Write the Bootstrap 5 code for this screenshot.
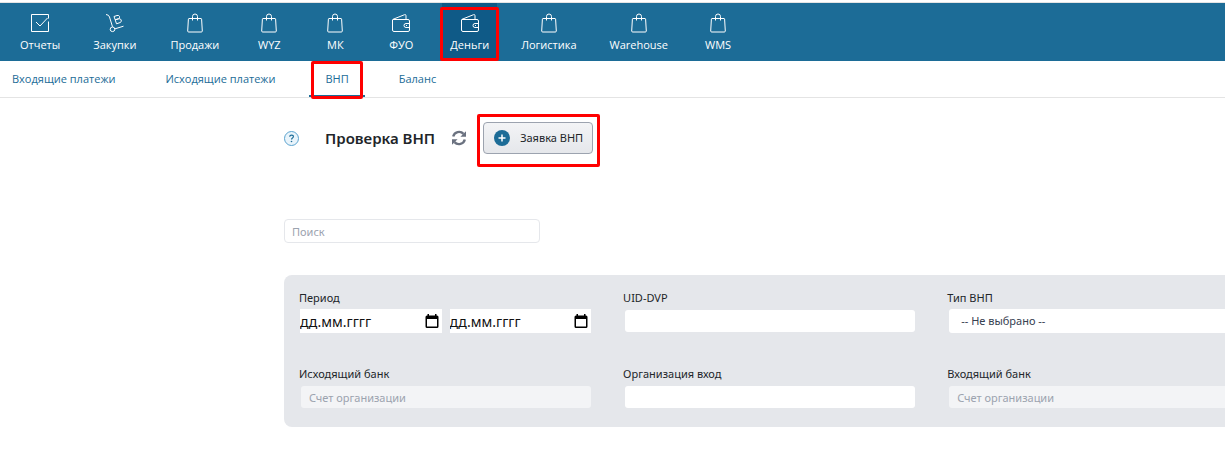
<!DOCTYPE html>
<html lang="ru">
<head>
<meta charset="utf-8">
<meta name="viewport" content="width=device-width, initial-scale=1">
<title>Проверка ВНП</title>
<link href="https://cdn.jsdelivr.net/npm/bootstrap@5.3.0/dist/css/bootstrap.min.css" rel="stylesheet">
<style>
  body { font-family: "Noto Sans", "Open Sans", sans-serif; font-size: 11px; line-height: 20px; color: #212529; }
  a { text-decoration: none; }
  .topbar { background: #1c6c97; border-top: 1px solid #e4e4e4; margin-top: 2px; padding: 0 12px; gap: 16px; font-family: "Open Sans", sans-serif; }
  .topbar a { min-width: 50px; height: 58px; padding: 10px 8px 0; color: #fff; }
  .topbar a.roomy { padding-left: 9px; padding-right: 9px; }
  .topbar a.active { background: #0f5a87; }
  .topbar svg { width: 20px; height: 20px; margin-bottom: 2px; fill: none; stroke: #fff; stroke-width: 1; }
  .subbar { height: 37px; padding: 0 12px; gap: 50px; border-bottom: 1px solid #e4e4e4; font-family: "Open Sans", sans-serif; }
  .subbar a { color: #1c6c97; }
  .subbar a.active::before { content: ""; position: absolute; left: -16px; right: -16px; bottom: 0; height: 2px; background: #1c6c97; }
  .marked::after { content: ""; position: absolute; border: 3px solid #f00; border-radius: 2px; pointer-events: none; }
  .topbar .marked::after { inset: 4px -2px 0; z-index: 1; }
  .subbar .marked::after { inset: 0 -14px -2px; }
  .create-wrap.marked::after { inset: -8px -7px -13px -6px; }
  .workspace { margin-left: 284px; padding-top: 24px; }
  h1 { font-size: 15px; line-height: 24px; font-weight: 600; margin: 0 16px 0 26px; }
  .plain { border: 0; background: none; padding: 0; display: flex; }
  .create { height: 32px; padding: 0 9px 0 10px; gap: 10px; border: 1px solid #9ca3af; border-radius: 4px; background: linear-gradient(#f3f4f6, #e5e7eb); color: #212529; }
  .search { width: 256px; height: 24px; margin-top: 65px; padding: 0 7px; border: 1px solid #e5e7eb; border-radius: 4px; }
  ::placeholder { color: #9ca3af; opacity: 1; }
  .filters { display: grid; grid-template-columns: minmax(0, 35fr) minmax(0, 35fr) minmax(0, 30fr); row-gap: 30px; margin-top: 32px; padding: 13px 0 17px 15px; background: #e5e7eb; border-radius: 8px 0 0 8px; }
  .filters label { display: block; }
  .slot { height: 26px; margin-right: 32px; gap: 8px; }
  .slot > input, .slot > select { flex: 1; min-width: 0; height: 22px; margin: 0 0 0 2px; padding: 0 8px; border: 0; border-radius: 3px; background: #fff; color: #374151; }
  .slot > select { height: 24px; padding: 0 12px; appearance: none; }
  .slot > input:disabled { background: #f3f4f6; }
  .slot.to-edge { margin-right: 0; }
  .to-edge > input, .to-edge > select { border-radius: 3px 0 0 3px; }
  .datebox { flex: 1; min-width: 0; height: 24px; background: #fff; padding-right: 3px; }
  .datebox input { flex: 1; min-width: 0; border: 0; padding: 0; background: none; font-size: 14px; height: 24px; }
  .datebox ::placeholder { color: #111; }
  .slot.period { margin-left: 1px; }
</style>
</head>
<body>
<svg class="d-none">
  <symbol id="bag" viewBox="0 0 20 20"><path d="M4 5.500h12q.5 0 .6.600l.7 11.900q0 1-1 1H3.700q-1 0-1-1L3.400 6.100q.1-.6.6-.6zM7.500 7.500V3.500q0-2.500 2.500-2.500t2.500 2.500v4"/></symbol>
  <symbol id="wallet" viewBox="0 0 20 20"><path d="M2 6.500h15q1.500 0 1.500 1.500v9q0 1.500-1.500 1.500H3Q1.500 18.500 1.500 17V7q0-.5.5-.7L13.500 1.700q1.500-.5 1.500 1v3.800M18.500 10.500h-3.500a2 2 0 0 0 0 4h3.500M15 12.500h1"/></symbol>
  <symbol id="calendar" viewBox="0 0 14 15"><path fill="#000" fill-rule="evenodd" d="M2.500 0h1.500v1.500h6V0h1.500v1.500H12q1.500 0 1.500 1.500v9.500q0 1.500-1.500 1.500H2Q.5 14 .5 12.500V3Q.5 1.500 2 1.500h.5zM2 5v7.500h10V5z"/></symbol>
</svg>
<nav class="topbar d-flex">
  <a href="#" class="d-flex flex-column align-items-center"><svg viewBox="0 0 20 20"><path d="M18.500 8.500v10h-17v-17h17v4M6 9l4 4 7.500-8"/></svg>Отчеты</a>
  <a href="#" class="roomy d-flex flex-column align-items-center"><svg viewBox="0 0 20 20"><path d="M1 1.500q3 .3 3.500 2.500l3 9.800M10 15.800l8.500-2.600"/><circle cx="7.500" cy="16.300" r="2.300"/><path d="M9 3.500l3-1q2-.5 2.500 1t-1 2.300l-3.300 1zM10.200 6.800l3.300-1q2-.6 2.700 1.200t-1.200 2.600l-3.500 1.200z"/></svg>Закупки</a>
  <a href="#" class="roomy d-flex flex-column align-items-center"><svg><use href="#bag"/></svg>Продажи</a>
  <a href="#" class="d-flex flex-column align-items-center"><svg><use href="#bag"/></svg>WYZ</a>
  <a href="#" class="d-flex flex-column align-items-center"><svg><use href="#bag"/></svg>МК</a>
  <a href="#" class="d-flex flex-column align-items-center"><svg><use href="#wallet"/></svg>ФУО</a>
  <a href="#" class="active marked position-relative d-flex flex-column align-items-center"><svg><use href="#wallet"/></svg>Деньги</a>
  <a href="#" class="d-flex flex-column align-items-center"><svg><use href="#bag"/></svg>Логистика</a>
  <a href="#" class="roomy d-flex flex-column align-items-center"><svg><use href="#bag"/></svg>Warehouse</a>
  <a href="#" class="d-flex flex-column align-items-center"><svg><use href="#bag"/></svg>WMS</a>
</nav>
<nav class="subbar d-flex">
  <a href="#" class="d-flex align-items-center">Входящие платежи</a>
  <a href="#" class="d-flex align-items-center">Исходящие платежи</a>
  <a href="#" class="active marked position-relative d-flex align-items-center">ВНП</a>
  <a href="#" class="d-flex align-items-center">Баланс</a>
</nav>
<main class="workspace">
  <div class="d-flex align-items-center">
    <button class="plain" type="button" aria-label="Справка"><svg width="15" height="15" viewBox="0 0 15 15"><circle cx="7.500" cy="7.500" r="7" fill="#e9f4fb" stroke="#5ba3cf"/><path d="M5.700 5.800q0-1.700 1.900-1.700t1.800 1.500q0 .9-.9 1.400t-.9 1.400" fill="none" stroke="#1c6c97" stroke-width="1.200"/><circle cx="7.500" cy="10.500" r=".8" fill="#1c6c97"/></svg></button>
    <h1>Проверка ВНП</h1>
    <button class="plain" type="button" aria-label="Обновить"><svg width="16" height="16" viewBox="0 0 16 16" fill="none" stroke="#6b7280" stroke-width="2.400"><path d="M2.200 6.500a6 6 0 0 1 10.300-2.600M13.800 9.500a6 6 0 0 1-10.300 2.600"/><path d="M15 1.200v5.600H9.400zM1 14.800V9.200h5.600z" fill="#6b7280" stroke="none"/></svg></button>
    <div class="create-wrap marked position-relative ms-3"><button type="button" class="create d-flex align-items-center"><svg width="16" height="16" viewBox="0 0 16 16"><circle cx="8" cy="8" r="8" fill="#1c6c97"/><path d="M8 4.500v7M4.500 8h7" stroke="#fff" stroke-width="1.500"/></svg>Заявка ВНП</button></div>
  </div>
  <input class="search d-block" type="search" placeholder="Поиск" aria-label="Поиск">
  <form class="filters">
    <div><label for="from">Период</label>
      <div class="slot period d-flex align-items-center">
        <div class="datebox d-flex align-items-center"><input id="from" type="text" placeholder="дд.мм.гггг"><button type="button" class="plain" aria-label="Дата начала"><svg width="14" height="15"><use href="#calendar"/></svg></button></div>
        <div class="datebox d-flex align-items-center"><input type="text" placeholder="дд.мм.гггг" aria-label="Дата окончания"><button type="button" class="plain" aria-label="Выбрать дату"><svg width="14" height="15"><use href="#calendar"/></svg></button></div>
      </div></div>
    <div><label for="uid">UID-DVP</label><div class="slot d-flex align-items-center"><input id="uid" type="text"></div></div>
    <div><label for="kind">Тип ВНП</label><div class="slot to-edge d-flex align-items-center"><select id="kind"><option>-- Не выбрано --</option></select></div></div>
    <div><label for="bank-out">Исходящий банк</label><div class="slot d-flex align-items-center"><input id="bank-out" type="text" placeholder="Счет организации" disabled></div></div>
    <div><label for="org-in">Организация вход</label><div class="slot d-flex align-items-center"><input id="org-in" type="text"></div></div>
    <div><label for="bank-in">Входящий банк</label><div class="slot to-edge d-flex align-items-center"><input id="bank-in" type="text" placeholder="Счет организации" disabled></div></div>
  </form>
</main>
<script src="https://cdn.jsdelivr.net/npm/bootstrap@5.3.0/dist/js/bootstrap.bundle.min.js"></script>
</body>
</html>
